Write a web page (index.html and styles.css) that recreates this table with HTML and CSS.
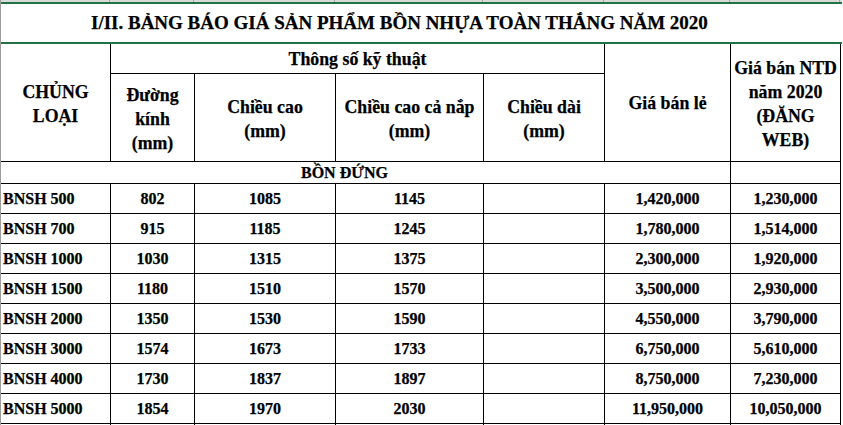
FILE: index.html
```html
<!DOCTYPE html>
<html lang="vi">
<head>
<meta charset="utf-8">
<title>Bảng báo giá bồn nhựa Toàn Thắng 2020</title>
<link rel="stylesheet" href="styles.css">
</head>
<body>
<div class="sheet">
  <div class="strip">
    <span></span><span></span><span></span><span></span><span></span><span></span><span></span>
  </div>
  <div class="title"><span class="title-text">I/II. BẢNG BÁO GIÁ SẢN PHẨM BỒN NHỰA TOÀN THẮNG NĂM 2020</span></div>
  <table class="grid">
    <colgroup>
      <col class="c0"><col class="c1"><col class="c2"><col class="c3"><col class="c4"><col class="c5"><col class="c6">
    </colgroup>
    <thead>
      <tr class="h1">
        <th rowspan="2" class="kind">CHỦNG<br>LOẠI</th>
        <th colspan="4">Thông số kỹ thuật</th>
        <th rowspan="2">Giá bán lẻ</th>
        <th rowspan="2" class="last">Giá bán NTD<br>năm 2020<br>(ĐĂNG<br>WEB)</th>
      </tr>
      <tr class="h2">
        <th class="three">Đường<br>kính<br>(mm)</th>
        <th>Chiều cao<br>(mm)</th>
        <th>Chiều cao cả nắp<br>(mm)</th>
        <th>Chiều dài<br>(mm)</th>
      </tr>
    </thead>
    <tbody>
      <tr class="group">
        <td colspan="6" class="group-label">BỒN ĐỨNG</td>
        <td></td>
      </tr>
      <tr><td class="name">BNSH 500</td><td>802</td><td>1085</td><td>1145</td><td></td><td>1,420,000</td><td>1,230,000</td></tr>
      <tr><td class="name">BNSH 700</td><td>915</td><td>1185</td><td>1245</td><td></td><td>1,780,000</td><td>1,514,000</td></tr>
      <tr><td class="name">BNSH 1000</td><td>1030</td><td>1315</td><td>1375</td><td></td><td>2,300,000</td><td>1,920,000</td></tr>
      <tr><td class="name">BNSH 1500</td><td>1180</td><td>1510</td><td>1570</td><td></td><td>3,500,000</td><td>2,930,000</td></tr>
      <tr><td class="name">BNSH 2000</td><td>1350</td><td>1530</td><td>1590</td><td></td><td>4,550,000</td><td>3,790,000</td></tr>
      <tr><td class="name">BNSH 3000</td><td>1574</td><td>1673</td><td>1733</td><td></td><td>6,750,000</td><td>5,610,000</td></tr>
      <tr><td class="name">BNSH 4000</td><td>1730</td><td>1837</td><td>1897</td><td></td><td>8,750,000</td><td>7,230,000</td></tr>
      <tr><td class="name">BNSH 5000</td><td>1854</td><td>1970</td><td>2030</td><td></td><td>11,950,000</td><td>10,050,000</td></tr>
      <tr class="next"><td></td><td></td><td></td><td></td><td></td><td></td><td></td></tr>
    </tbody>
  </table>
</div>
</body>
</html>
```

FILE: styles.css
```css
html, body {
  margin: 0;
  padding: 0;
  overflow: hidden;
  background: #ffffff;
}

body {
  font-family: "Liberation Serif", "Times New Roman", serif;
  font-weight: bold;
  color: #000000;
  -webkit-text-stroke: 0.25px #000000;
}

.sheet {
  width: 841px;
  border-left: 1px solid #9c9c9c;
  height: 425px;
}

.strip {
  display: grid;
  grid-template-columns: 109px 84px 141px 148px 121px 126px 110px;
  height: 2px;
  background: #d9d9d9;
}

.strip span {
  border-right: 1px solid #a8a8a8;
}

.title {
  display: flex;
  align-items: center;
  height: 38px;
  border-top: 2px solid #217346;
  border-bottom: 2px solid #217346;
  font-size: 19px;
  padding-left: 90px;
  white-space: nowrap;
}

.grid {
  table-layout: fixed;
  border-collapse: separate;
  border-spacing: 0;
  width: 840px;
  font-size: 16px;
}

.c0 { width: 110px; }
.c1 { width: 84px; }
.c2 { width: 141px; }
.c3 { width: 148px; }
.c4 { width: 121px; }
.c5 { width: 126px; }
.c6 { width: 110px; }

.grid th,
.grid td {
  box-sizing: border-box;
  border-right: 1px solid #000000;
  border-bottom: 1px solid #000000;
  padding: 0;
  text-align: center;
  vertical-align: middle;
  white-space: nowrap;
  overflow: hidden;
}

.grid th {
  font-weight: bold;
  font-size: 17.8px;
  line-height: 24px;
}

.h1 th { height: 30px; }
.h2 th { height: 88px; padding-top: 2px; }
.h1 .kind { padding-top: 2px; }
.h1 .last { padding-top: 3px; }

.group .group-label {
  text-align: left;
  padding-left: 300px;
  line-height: 20px;
}

.grid tbody tr td { height: 30px; }
.grid tbody tr.group td { height: 22px; }

.grid td.name {
  text-align: left;
  padding-left: 2px;
}

.grid tr.next td { height: 10px; }
```
